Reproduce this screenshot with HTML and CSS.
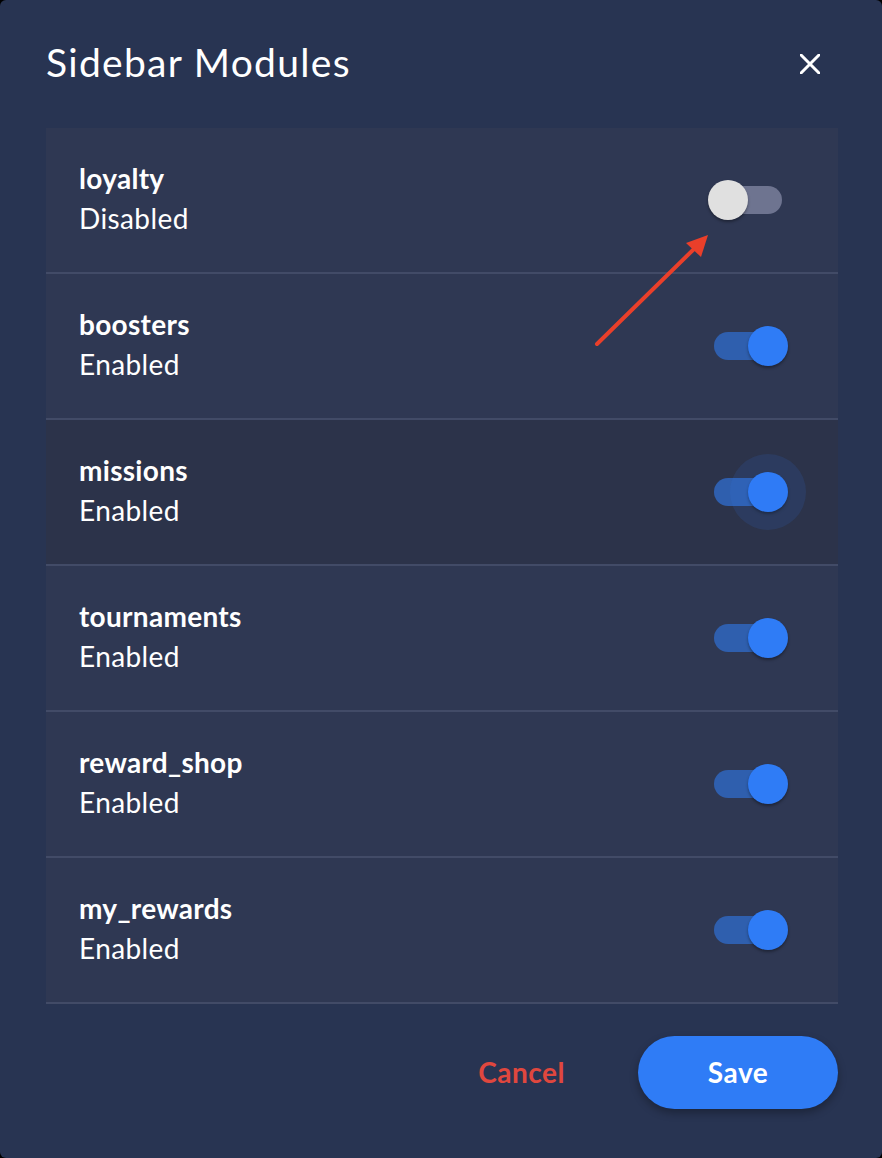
FILE: index.html
```html
<!DOCTYPE html>
<html lang="en">
<head>
    <meta charset="UTF-8">
    <title>Sidebar Modules</title>
    <link rel="stylesheet" href="styles.css">
</head>
<body>
    <div class="dialog">
        <header class="dialog-header">
            <h1>Sidebar Modules</h1>
            <button class="close-button" aria-label="Close">
                <svg width="20" height="20" viewBox="0 0 20 20"><path d="M1 1 L19 19 M19 1 L1 19" stroke="#fff" stroke-width="3" stroke-linecap="square" fill="none"/></svg>
            </button>
        </header>

        <div class="module-list">
            <div class="module-row">
                <div class="module-text">
                    <div class="module-name">loyalty</div>
                    <div class="module-status">Disabled</div>
                </div>
                <div class="switch"><span class="track"></span><span class="knob"></span></div>
            </div>
            <div class="module-row">
                <div class="module-text">
                    <div class="module-name">boosters</div>
                    <div class="module-status">Enabled</div>
                </div>
                <div class="switch on"><span class="track"></span><span class="knob"></span></div>
            </div>
            <div class="module-row hover">
                <div class="module-text">
                    <div class="module-name">missions</div>
                    <div class="module-status">Enabled</div>
                </div>
                <div class="switch on focus"><span class="track"></span><span class="knob"></span></div>
            </div>
            <div class="module-row">
                <div class="module-text">
                    <div class="module-name">tournaments</div>
                    <div class="module-status">Enabled</div>
                </div>
                <div class="switch on"><span class="track"></span><span class="knob"></span></div>
            </div>
            <div class="module-row">
                <div class="module-text">
                    <div class="module-name">reward_shop</div>
                    <div class="module-status">Enabled</div>
                </div>
                <div class="switch on"><span class="track"></span><span class="knob"></span></div>
            </div>
            <div class="module-row">
                <div class="module-text">
                    <div class="module-name">my_rewards</div>
                    <div class="module-status">Enabled</div>
                </div>
                <div class="switch on"><span class="track"></span><span class="knob"></span></div>
            </div>
        </div>

        <footer class="dialog-actions">
            <button class="cancel-button">Cancel</button>
            <button class="save-button">Save</button>
        </footer>

        <!-- anotación -->
        <svg class="annotation" width="882" height="1158" viewBox="0 0 882 1158">
            <line x1="597" y1="344" x2="695" y2="248" stroke="#ea3f2a" stroke-width="4" stroke-linecap="round"/>
            <polygon points="708,235 686,243 701,257" fill="#ea3f2a"/>
        </svg>
    </div>
</body>
</html>
```

FILE: styles.css
```css
:root {
    --bg-color: #283452; --row-bg: #2f3853; --row-hover-bg: #2c334a;
    --divider: #424b67; --text-color: #ffffff; --primary: #2f7cf6;
    --track-on: #2f5fae; --track-off: #6e7490; --knob-off: #e0e0e0; --danger: #e0473e;
}
html, body { margin: 0; padding: 0; height: 100%; }
body {
    font-family: Lato, "Noto Sans", sans-serif;
    background-color: #000; color: var(--text-color);
}
.dialog {
    position: relative; box-sizing: border-box; height: 1158px;
    background-color: var(--bg-color); border-radius: 6px; overflow: hidden;
    display: flex; flex-direction: column;
}
.dialog-header {
    height: 128px; box-sizing: border-box; padding: 0 62px 4px 46px;
    display: flex; align-items: center; justify-content: space-between;
}
.dialog-header h1 { margin: 0; font-size: 39px; font-weight: 400; letter-spacing: 1.3px; }
.close-button {
    background: none; border: 0; padding: 0; width: 20px; height: 20px;
    cursor: pointer; display: flex; margin-top: 4px;
}
.module-list { margin: 0 44px 0 46px; }
.module-row {
    height: 144px; border-bottom: 2px solid var(--divider);
    background-color: var(--row-bg); padding: 0 56px 0 33px;
    display: flex; align-items: center; justify-content: space-between;
}
.module-row.hover { background-color: var(--row-hover-bg); }
.module-text { display: flex; flex-direction: column; margin-top: -4px; }
.module-name { font-size: 28px; font-weight: 700; line-height: 39px; letter-spacing: 0.3px; }
.module-status { font-size: 28px; font-weight: 400; line-height: 40px; letter-spacing: 0.4px; }
.switch { position: relative; width: 68px; height: 28px; }
.switch .track {
    position: absolute; inset: 0; border-radius: 14px; background-color: var(--track-off);
}
.switch .knob {
    position: absolute; top: -6px; left: -6px; width: 40px; height: 40px;
    border-radius: 50%; background-color: var(--knob-off);
    box-shadow: 0 2px 3px rgba(0, 0, 0, 0.35);
}
.switch.on .track { background-color: var(--track-on); }
.switch.on .knob { left: 34px; background-color: var(--primary); }
.switch.focus .knob::before {
    content: ""; position: absolute; top: -18px; left: -18px; width: 76px; height: 76px;
    border-radius: 50%; background-color: rgba(47, 124, 246, 0.12);
}
.dialog-actions {
    flex-grow: 1; display: flex; align-items: center; justify-content: flex-end;
    gap: 47px; padding: 0 44px 18px 0;
}
.cancel-button {
    background: none; border: 0; color: var(--danger); cursor: pointer;
    font-family: inherit; font-size: 28px; font-weight: 700; padding: 10px 26px;
    letter-spacing: 0.5px;
}
.save-button {
    width: 200px; height: 73px; border: 0; border-radius: 37px; cursor: pointer;
    background-color: var(--primary); color: #fff;
    font-family: inherit; font-size: 28px; font-weight: 700; letter-spacing: 0.5px;
    box-shadow: 0 4px 8px rgba(0, 0, 0, 0.3);
}
.annotation { position: absolute; top: 0; left: 0; pointer-events: none; }
```
